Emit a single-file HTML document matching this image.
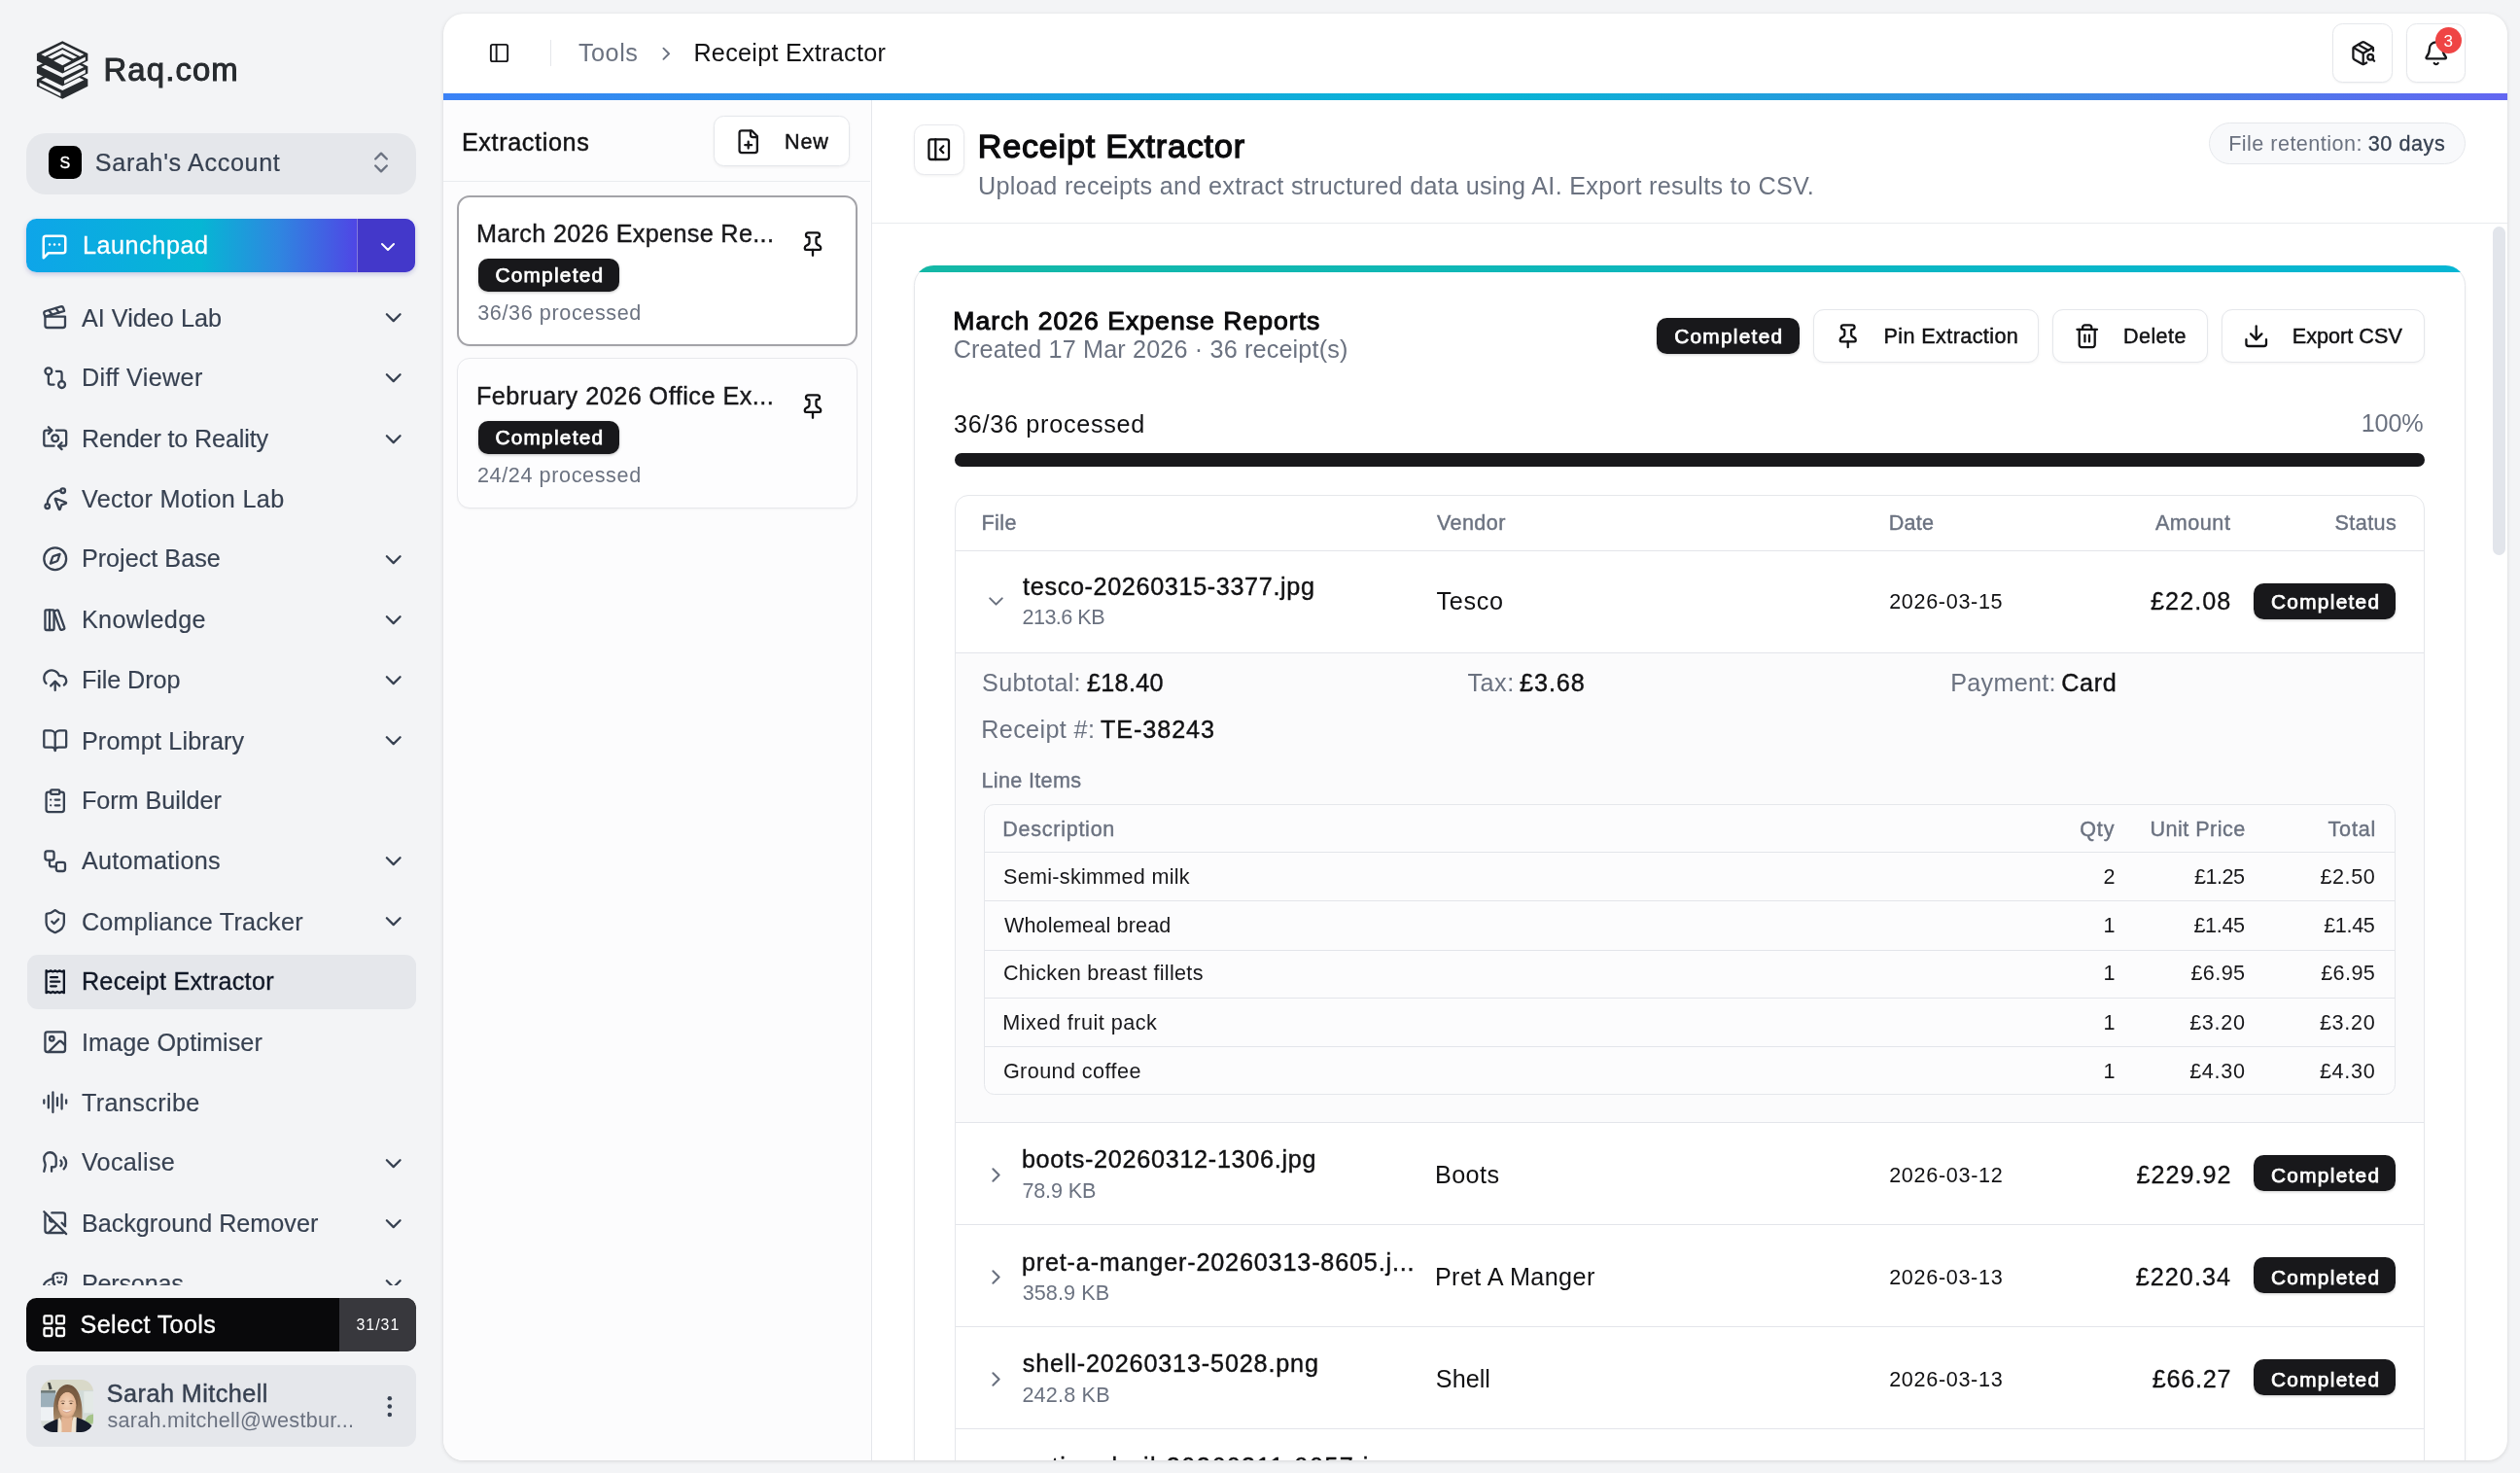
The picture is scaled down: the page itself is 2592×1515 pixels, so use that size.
<!DOCTYPE html>
<html lang="en"><head><meta charset="utf-8"><title>Receipt Extractor - Raq.com</title><style>
*{box-sizing:border-box;margin:0;padding:0}
html,body{width:2592px;height:1515px;overflow:hidden;background:#f3f4f6;font-family:"Liberation Sans",sans-serif;}
body{position:relative}
#app{position:absolute;left:0;top:0;width:2592px;height:1515px;will-change:transform}
.b{position:absolute;display:block}
.t{position:absolute;white-space:nowrap;display:block}
.i{position:absolute;display:block;overflow:visible}
.sidebar{position:absolute;left:0;top:0;width:456px;height:1515px}
.panel{background:#fff;border-radius:20.5px;overflow:hidden;box-shadow:0 1px 4px rgba(0,0,0,.12),0 0 1px rgba(0,0,0,.08)}
</style></head>
<body>
<div id="app">
<aside class="sidebar">
<svg class="i" style="left:34px;top:38px" width="62" height="68" viewBox="0 0 1343 1473">
<polygon points="655,660 1220,940 1220,1100 655,1380 85,1100 85,940" fill="#272b2f"/>
<polygon points="655,722 1135,958 655,1192 180,958" fill="#f3f4f6"/>
<polygon points="615,1253 140,1013 140,1090 615,1328" fill="#f3f4f6"/>
<polygon points="655,375 1220,655 1220,815 655,1095 85,815 85,655" fill="#272b2f"/>
<polygon points="655,437 1135,673 655,907 180,673" fill="#f3f4f6"/>
<polygon points="695,968 1165,728 1165,805 695,1043" fill="#f3f4f6"/>
<polygon points="655,90 1220,370 1220,530 655,810 85,530 85,370" fill="#272b2f"/>
<polygon points="180,388 655,152 1135,388 1045,432 655,238 268,432" fill="#f3f4f6"/>
<polygon points="330,447 655,283 982,447 895,490 655,372 418,490" fill="#f3f4f6"/>
<polygon points="655,432 850,530 655,632 462,530" fill="#f3f4f6"/>
<polygon points="695,683 1165,443 1165,520 695,758" fill="#f3f4f6"/>
</svg>
<span class="t" style="left:106.50px;top:56px;font-size:32.90px;line-height:32.90px;color:#272b2f;letter-spacing:1.103px;-webkit-text-stroke:1.0px #272b2f;">Raq.com</span>
<div class="b" style="left:27.00px;top:136.50px;width:401.00px;height:63.20px;background:#e5e7eb;border-radius:20px;"></div>
<div class="b" style="left:49.50px;top:150.00px;width:34.80px;height:34.00px;background:#000;border-radius:8.5px;"></div>
<span class="t" style="left:61.57px;top:160px;font-size:16.00px;line-height:16.00px;color:#fff;-webkit-text-stroke:0.35px #fff;">S</span>
<span class="t" style="left:97.86px;top:155px;font-size:25.20px;line-height:25.20px;color:#374151;letter-spacing:0.622px;-webkit-text-stroke:0.2px #374151;">Sarah's Account</span>
<svg class="i" style="left:377.80px;top:152.80px" width="28.00" height="28.00" viewBox="0 0 24 24" fill="none" stroke="#6b7280" stroke-width="2" stroke-linecap="round" stroke-linejoin="round"><path d="m7 15 5 5 5-5"/><path d="m7 9 5-5 5 5"/></svg>
<div class="b" style="left:27.00px;top:225.00px;width:400.30px;height:55.00px;border-radius:10.5px;background:linear-gradient(90deg,#0ea5e9 0%,#06b6d4 45%,#2f86e0 65%,#4f46e5 85%,#4f46e5 100%);box-shadow:0 2px 5px rgba(60,60,160,.25);overflow:hidden;"><div class="b" style="left:340px;top:0;width:61px;height:55px;background:#4338ca;border-left:1.5px solid rgba(255,255,255,.35)"></div></div>
<svg class="i" style="left:40.50px;top:239.20px" width="30.00" height="30.00" viewBox="0 0 24 24" fill="none" stroke="#fff" stroke-width="2" stroke-linecap="round" stroke-linejoin="round"><path d="M21 15a2 2 0 0 1-2 2H7l-4 4V5a2 2 0 0 1 2-2h14a2 2 0 0 1 2 2z"/><path d="M8 10h.01"/><path d="M12 10h.01"/><path d="M16 10h.01"/></svg>
<span class="t" style="left:84.93px;top:240px;font-size:25.20px;line-height:25.20px;color:#fff;letter-spacing:0.558px;-webkit-text-stroke:0.3px #fff;">Launchpad</span>
<svg class="i" style="left:386.75px;top:241.80px" width="24.00" height="24.00" viewBox="0 0 24 24" fill="none" stroke="#fff" stroke-width="2" stroke-linecap="round" stroke-linejoin="round"><path d="m6 9 6 6 6-6"/></svg>
<nav class="b" style="left:0;top:290px;width:440px;height:1032px;overflow:hidden">
<svg class="i" style="left:42.89px;top:23.08px" width="27.43" height="27.43" viewBox="0 0 24 24" fill="none" stroke="#374151" stroke-width="2" stroke-linecap="round" stroke-linejoin="round"><path d="M20.2 6 3 11l-.9-2.4c-.3-1.1.3-2.2 1.3-2.5l13.5-4c1.1-.3 2.2.3 2.5 1.3Z"/><path d="m6.2 5.3 3.1 3.9"/><path d="m12.4 3.4 3.1 4"/><path d="M3 11h18v8a2 2 0 0 1-2 2H5a2 2 0 0 1-2-2Z"/></svg>
<span class="t" style="left:83.90px;top:25px;font-size:25.20px;line-height:25.20px;color:#374151;letter-spacing:0.027px;-webkit-text-stroke:0.15px #374151;">AI Video Lab</span>
<svg class="i" style="left:390.59px;top:23.39px" width="27.43" height="27.43" viewBox="0 0 24 24" fill="none" stroke="#374151" stroke-width="2" stroke-linecap="round" stroke-linejoin="round"><path d="m6 9 6 6 6-6"/></svg>
<svg class="i" style="left:42.89px;top:85.18px" width="27.43" height="27.43" viewBox="0 0 24 24" fill="none" stroke="#374151" stroke-width="2" stroke-linecap="round" stroke-linejoin="round"><circle cx="18" cy="18" r="3"/><circle cx="6" cy="6" r="3"/><path d="M13 6h3a2 2 0 0 1 2 2v7"/><path d="M11 18H8a2 2 0 0 1-2-2V9"/></svg>
<span class="t" style="left:83.90px;top:86px;font-size:25.20px;line-height:25.20px;color:#374151;letter-spacing:0.360px;-webkit-text-stroke:0.15px #374151;">Diff Viewer</span>
<svg class="i" style="left:390.59px;top:85.48px" width="27.43" height="27.43" viewBox="0 0 24 24" fill="none" stroke="#374151" stroke-width="2" stroke-linecap="round" stroke-linejoin="round"><path d="m6 9 6 6 6-6"/></svg>
<svg class="i" style="left:42.89px;top:147.27px" width="27.43" height="27.43" viewBox="0 0 24 24" fill="none" stroke="#374151" stroke-width="2" stroke-linecap="round" stroke-linejoin="round"><path d="M11 19H4a2 2 0 0 1-2-2V7a2 2 0 0 1 2-2h5"/><path d="M13 5h7a2 2 0 0 1 2 2v10a2 2 0 0 1-2 2h-5"/><circle cx="12" cy="12" r="3"/><path d="m18 22-3-3 3-3"/><path d="m6 2 3 3-3 3"/></svg>
<span class="t" style="left:83.90px;top:149px;font-size:25.20px;line-height:25.20px;color:#374151;letter-spacing:-0.144px;-webkit-text-stroke:0.15px #374151;">Render to Reality</span>
<svg class="i" style="left:390.59px;top:147.56px" width="27.43" height="27.43" viewBox="0 0 24 24" fill="none" stroke="#374151" stroke-width="2" stroke-linecap="round" stroke-linejoin="round"><path d="m6 9 6 6 6-6"/></svg>
<svg class="i" style="left:42.89px;top:209.35px" width="27.43" height="27.43" viewBox="0 0 24 24" fill="none" stroke="#374151" stroke-width="2" stroke-linecap="round" stroke-linejoin="round"><path d="M12.034 12.681a.498.498 0 0 1 .647-.647l9 3.5a.5.5 0 0 1-.033.943l-3.444 1.068a1 1 0 0 0-.66.66l-1.067 3.443a.5.5 0 0 1-.943.033z"/><path d="M5 17A12 12 0 0 1 17 5"/><circle cx="19" cy="5" r="2"/><circle cx="5" cy="19" r="2"/></svg>
<span class="t" style="left:83.90px;top:211px;font-size:25.20px;line-height:25.20px;color:#374151;letter-spacing:0.330px;-webkit-text-stroke:0.15px #374151;">Vector Motion Lab</span>
<svg class="i" style="left:42.89px;top:271.45px" width="27.43" height="27.43" viewBox="0 0 24 24" fill="none" stroke="#374151" stroke-width="2" stroke-linecap="round" stroke-linejoin="round"><path d="m16.24 7.76-1.804 5.411a2 2 0 0 1-1.265 1.265L7.76 16.24l1.804-5.411a2 2 0 0 1 1.265-1.265z"/><circle cx="12" cy="12" r="10"/></svg>
<span class="t" style="left:83.90px;top:272px;font-size:25.20px;line-height:25.20px;color:#374151;letter-spacing:0.009px;-webkit-text-stroke:0.15px #374151;">Project Base</span>
<svg class="i" style="left:390.59px;top:271.75px" width="27.43" height="27.43" viewBox="0 0 24 24" fill="none" stroke="#374151" stroke-width="2" stroke-linecap="round" stroke-linejoin="round"><path d="m6 9 6 6 6-6"/></svg>
<svg class="i" style="left:42.89px;top:333.54px" width="27.43" height="27.43" viewBox="0 0 24 24" fill="none" stroke="#374151" stroke-width="2" stroke-linecap="round" stroke-linejoin="round"><rect width="8" height="18" x="3" y="3" rx="1"/><path d="M7 3v18"/><path d="M20.4 18.9c.2.5-.1 1.1-.6 1.3l-1.9.7c-.5.2-1.1-.1-1.3-.6L11.1 5.1c-.2-.5.1-1.1.6-1.3l1.900-.7c.5-.2 1.100.1 1.300.6Z"/></svg>
<span class="t" style="left:83.90px;top:335px;font-size:25.20px;line-height:25.20px;color:#374151;letter-spacing:0.377px;-webkit-text-stroke:0.15px #374151;">Knowledge</span>
<svg class="i" style="left:390.59px;top:333.84px" width="27.43" height="27.43" viewBox="0 0 24 24" fill="none" stroke="#374151" stroke-width="2" stroke-linecap="round" stroke-linejoin="round"><path d="m6 9 6 6 6-6"/></svg>
<svg class="i" style="left:42.89px;top:395.62px" width="27.43" height="27.43" viewBox="0 0 24 24" fill="none" stroke="#374151" stroke-width="2" stroke-linecap="round" stroke-linejoin="round"><path d="M12 13v8"/><path d="M4 14.899A7 7 0 1 1 15.71 8h1.79a4.5 4.5 0 0 1 2.5 8.242"/><path d="m8 17 4-4 4 4"/></svg>
<span class="t" style="left:83.90px;top:397px;font-size:25.20px;line-height:25.20px;color:#374151;letter-spacing:-0.072px;-webkit-text-stroke:0.15px #374151;">File Drop</span>
<svg class="i" style="left:390.59px;top:395.93px" width="27.43" height="27.43" viewBox="0 0 24 24" fill="none" stroke="#374151" stroke-width="2" stroke-linecap="round" stroke-linejoin="round"><path d="m6 9 6 6 6-6"/></svg>
<svg class="i" style="left:42.89px;top:457.72px" width="27.43" height="27.43" viewBox="0 0 24 24" fill="none" stroke="#374151" stroke-width="2" stroke-linecap="round" stroke-linejoin="round"><path d="M12 7v14"/><path d="M3 18a1 1 0 0 1-1-1V4a1 1 0 0 1 1-1h5a4 4 0 0 1 4 4 4 4 0 0 1 4-4h5a1 1 0 0 1 1 1v13a1 1 0 0 1-1 1h-6a3 3 0 0 0-3 3 3 3 0 0 0-3-3z"/></svg>
<span class="t" style="left:83.90px;top:460px;font-size:25.20px;line-height:25.20px;color:#374151;letter-spacing:0.165px;-webkit-text-stroke:0.15px #374151;">Prompt Library</span>
<svg class="i" style="left:390.59px;top:458.02px" width="27.43" height="27.43" viewBox="0 0 24 24" fill="none" stroke="#374151" stroke-width="2" stroke-linecap="round" stroke-linejoin="round"><path d="m6 9 6 6 6-6"/></svg>
<svg class="i" style="left:42.89px;top:519.80px" width="27.43" height="27.43" viewBox="0 0 24 24" fill="none" stroke="#374151" stroke-width="2" stroke-linecap="round" stroke-linejoin="round"><rect width="8" height="4" x="8" y="2" rx="1" ry="1"/><path d="M16 4h2a2 2 0 0 1 2 2v14a2 2 0 0 1-2 2H6a2 2 0 0 1-2-2V6a2 2 0 0 1 2-2h2"/><path d="M12 11h4"/><path d="M12 16h4"/><path d="M8 11h.01"/><path d="M8 16h.01"/></svg>
<span class="t" style="left:83.90px;top:521px;font-size:25.20px;line-height:25.20px;color:#374151;letter-spacing:-0.020px;-webkit-text-stroke:0.15px #374151;">Form Builder</span>
<svg class="i" style="left:42.89px;top:581.89px" width="27.43" height="27.43" viewBox="0 0 24 24" fill="none" stroke="#374151" stroke-width="2" stroke-linecap="round" stroke-linejoin="round"><rect width="8" height="8" x="3" y="3" rx="2"/><path d="M7 11v4a2 2 0 0 0 2 2h4"/><rect width="8" height="8" x="13" y="13" rx="2"/></svg>
<span class="t" style="left:83.90px;top:583px;font-size:25.20px;line-height:25.20px;color:#374151;letter-spacing:0.268px;-webkit-text-stroke:0.15px #374151;">Automations</span>
<svg class="i" style="left:390.59px;top:582.20px" width="27.43" height="27.43" viewBox="0 0 24 24" fill="none" stroke="#374151" stroke-width="2" stroke-linecap="round" stroke-linejoin="round"><path d="m6 9 6 6 6-6"/></svg>
<svg class="i" style="left:42.89px;top:643.99px" width="27.43" height="27.43" viewBox="0 0 24 24" fill="none" stroke="#374151" stroke-width="2" stroke-linecap="round" stroke-linejoin="round"><path d="M20 13c0 5-3.5 7.5-7.66 8.950a1 1 0 0 1-.67-.01C7.5 20.5 4 18 4 13V6a1 1 0 0 1 1-1c2 0 4.5-1.2 6.240-2.720a1.170 1.170 0 0 1 1.520 0C14.510 3.810 17 5 19 5a1 1 0 0 1 1 1z"/><path d="m9 12 2 2 4-4"/></svg>
<span class="t" style="left:83.90px;top:646px;font-size:25.20px;line-height:25.20px;color:#374151;letter-spacing:0.216px;-webkit-text-stroke:0.15px #374151;">Compliance Tracker</span>
<svg class="i" style="left:390.59px;top:644.29px" width="27.43" height="27.43" viewBox="0 0 24 24" fill="none" stroke="#374151" stroke-width="2" stroke-linecap="round" stroke-linejoin="round"><path d="m6 9 6 6 6-6"/></svg>
<div class="b" style="left:27.50px;top:692.00px;width:400.80px;height:55.50px;background:#e5e7eb;border-radius:11px;"></div>
<svg class="i" style="left:42.89px;top:706.07px" width="27.43" height="27.43" viewBox="0 0 24 24" fill="none" stroke="#111827" stroke-width="2" stroke-linecap="round" stroke-linejoin="round"><path d="M4 2v20l2-1 2 1 2-1 2 1 2-1 2 1 2-1 2 1V2l-2 1-2-1-2 1-2-1-2 1-2-1-2 1Z"/><path d="M14 8H8"/><path d="M16 12H8"/><path d="M13 16H8"/></svg>
<span class="t" style="left:83.90px;top:707px;font-size:25.20px;line-height:25.20px;color:#111827;letter-spacing:0.281px;-webkit-text-stroke:0.35px #111827;">Receipt Extractor</span>
<svg class="i" style="left:42.89px;top:768.16px" width="27.43" height="27.43" viewBox="0 0 24 24" fill="none" stroke="#374151" stroke-width="2" stroke-linecap="round" stroke-linejoin="round"><rect width="18" height="18" x="3" y="3" rx="2" ry="2"/><circle cx="9" cy="9" r="2"/><path d="m21 15-3.086-3.086a2 2 0 0 0-2.828 0L6 21"/></svg>
<span class="t" style="left:83.90px;top:770px;font-size:25.20px;line-height:25.20px;color:#374151;letter-spacing:0.083px;-webkit-text-stroke:0.15px #374151;">Image Optimiser</span>
<svg class="i" style="left:42.89px;top:830.25px" width="27.43" height="27.43" viewBox="0 0 24 24" fill="none" stroke="#374151" stroke-width="2" stroke-linecap="round" stroke-linejoin="round"><path d="M2 10v3"/><path d="M6 6v11"/><path d="M10 3v18"/><path d="M14 8v7"/><path d="M18 5v13"/><path d="M22 10v3"/></svg>
<span class="t" style="left:83.90px;top:832px;font-size:25.20px;line-height:25.20px;color:#374151;letter-spacing:0.374px;-webkit-text-stroke:0.15px #374151;">Transcribe</span>
<svg class="i" style="left:42.89px;top:892.34px" width="27.43" height="27.43" viewBox="0 0 24 24" fill="none" stroke="#374151" stroke-width="2" stroke-linecap="round" stroke-linejoin="round"><path d="M8.8 20v-4.1l1.9.2a2.3 2.3 0 0 0 2.164-2.1V8.300A5.370 5.370 0 0 0 2 8.250c0 2.8.656 3.054 1 4.550a5.770 5.770 0 0 1 .029 2.758L2 20"/><path d="M19.8 17.8a7.500 7.500 0 0 0 .003-10.603"/><path d="M17 15a3.500 3.500 0 0 0-.025-4.975"/></svg>
<span class="t" style="left:83.90px;top:893px;font-size:25.20px;line-height:25.20px;color:#374151;letter-spacing:0.301px;-webkit-text-stroke:0.15px #374151;">Vocalise</span>
<svg class="i" style="left:390.59px;top:892.64px" width="27.43" height="27.43" viewBox="0 0 24 24" fill="none" stroke="#374151" stroke-width="2" stroke-linecap="round" stroke-linejoin="round"><path d="m6 9 6 6 6-6"/></svg>
<svg class="i" style="left:42.89px;top:954.43px" width="27.43" height="27.43" viewBox="0 0 24 24" fill="none" stroke="#374151" stroke-width="2" stroke-linecap="round" stroke-linejoin="round"><line x1="2" x2="22" y1="2" y2="22"/><path d="M10.41 10.41a2 2 0 1 1-2.83-2.83"/><line x1="13.5" x2="6" y1="13.5" y2="21"/><line x1="18" x2="21" y1="12" y2="15"/><path d="M3.590 3.590A1.990 1.990 0 0 0 3 5v14a2 2 0 0 0 2 2h14c.550 0 1.052-.220 1.410-.590"/><path d="M21 15V5a2 2 0 0 0-2-2H9"/></svg>
<span class="t" style="left:83.90px;top:956px;font-size:25.20px;line-height:25.20px;color:#374151;letter-spacing:-0.012px;-webkit-text-stroke:0.15px #374151;">Background Remover</span>
<svg class="i" style="left:390.59px;top:954.73px" width="27.43" height="27.43" viewBox="0 0 24 24" fill="none" stroke="#374151" stroke-width="2" stroke-linecap="round" stroke-linejoin="round"><path d="m6 9 6 6 6-6"/></svg>
<svg class="i" style="left:42.89px;top:1016.52px" width="27.43" height="27.43" viewBox="0 0 24 24" fill="none" stroke="#374151" stroke-width="2" stroke-linecap="round" stroke-linejoin="round"><path d="M10 11h.01"/><path d="M14 6h.01"/><path d="M18 6h.01"/><path d="M6.5 13.1h.01"/><path d="M22 5c0 9-4 12-6 12s-6-3-6-12c0-2 2-3 6-3s6 1 6 3"/><path d="M17.4 9.9c-.8.8-2 .8-2.8 0"/><path d="M10.100 7.100C9 7.200 7.700 7.700 6 8.600c-3.500 2-4.700 3.900-3.700 5.600 4.500 7.800 9.500 8.400 11.200 7.400.9-.5 1.900-2.100 1.900-4.700"/><path d="M9.100 16.500c.3-1.100 1.400-1.700 2.400-1.400"/></svg>
<span class="t" style="left:83.90px;top:1018px;font-size:25.20px;line-height:25.20px;color:#374151;letter-spacing:-0.208px;-webkit-text-stroke:0.15px #374151;">Personas</span>
<svg class="i" style="left:390.59px;top:1016.82px" width="27.43" height="27.43" viewBox="0 0 24 24" fill="none" stroke="#374151" stroke-width="2" stroke-linecap="round" stroke-linejoin="round"><path d="m6 9 6 6 6-6"/></svg>
</nav>
<div class="b" style="left:27.00px;top:1335.00px;width:400.50px;height:55.00px;background:#09090b;border-radius:10.5px;overflow:hidden;"><div class="b" style="left:322px;top:0;width:80px;height:55px;background:#38383d"></div></div>
<svg class="i" style="left:41.89px;top:1349.79px" width="27.43" height="27.43" viewBox="0 0 24 24" fill="none" stroke="#fff" stroke-width="2" stroke-linecap="round" stroke-linejoin="round"><rect width="7" height="7" x="3" y="3" rx="1"/><rect width="7" height="7" x="14" y="3" rx="1"/><rect width="7" height="7" x="14" y="14" rx="1"/><rect width="7" height="7" x="3" y="14" rx="1"/></svg>
<span class="t" style="left:82.61px;top:1350px;font-size:25.20px;line-height:25.20px;color:#fff;letter-spacing:0.353px;-webkit-text-stroke:0.3px #fff;">Select Tools</span>
<span class="t" style="left:366.40px;top:1355px;font-size:15.80px;line-height:15.80px;color:#fff;letter-spacing:1.083px;">31/31</span>
<div class="b" style="left:27.00px;top:1404.00px;width:400.50px;height:83.50px;background:#e5e7eb;border-radius:12px;"></div>
<div class="b" style="left:41.8px;top:1418.8px;width:54.4px;height:54.4px;border-radius:12.500px;overflow:hidden">
<svg width="54.4" height="54.4" viewBox="0 0 54 54" style="display:block">
<defs><filter id="avblur" x="-10%" y="-10%" width="120%" height="120%"><feGaussianBlur stdDeviation="0.55"/></filter>
<radialGradient id="avface" cx="0.5" cy="0.42" r="0.62"><stop offset="0" stop-color="#f3d2b8"/><stop offset="0.7" stop-color="#e5b896"/><stop offset="1" stop-color="#cf9d7c"/></radialGradient>
<linearGradient id="avhair" x1="0" y1="0" x2="0" y2="1"><stop offset="0" stop-color="#6d523c"/><stop offset="0.5" stop-color="#8a6b4e"/><stop offset="1" stop-color="#b29472"/></linearGradient></defs>
<g filter="url(#avblur)">
<rect x="-2" y="-2" width="58" height="58" fill="#d6dbd6"/>
<rect x="-2" y="-2" width="58" height="14" fill="#d9d9c9"/>
<rect x="-2" y="12" width="17" height="17" fill="#9db0bb"/>
<rect x="-2" y="11" width="17" height="2.500" fill="#6f7a78"/>
<rect x="-2" y="28" width="17" height="14" fill="#eef1f4"/>
<rect x="38" y="11" width="18" height="26" fill="#d2dbd8"/>
<rect x="44" y="12" width="12" height="22" fill="#e3e9e6"/>
<path d="M45 44 C45 38 50 35 56 35 L56 46Z" fill="#a6c48a"/>
<path d="M7 3 L9.500 3 L11.500 9.500 L8.500 10.500Z" fill="#3f4340"/>
<path d="M13.500 42 C11 22 16 5.500 27 5 C38 5 43.500 20 42 42 L36 46 L18 46Z" fill="url(#avhair)"/>
<path d="M-1 56 C0 47 7 44 17.500 40 L22 56Z" fill="#141a2b"/>
<path d="M55 56 C55 47 48 42 36.500 38.500 L31 56Z" fill="#141a2b"/>
<path d="M17.500 40 L19.500 39 L23 47 L21 56 L17 56Z" fill="#efe4d2"/>
<path d="M36.500 38.500 L33.500 38 L30 47 L31.500 56 L36 56Z" fill="#efe4d2"/>
<path d="M21 38 L32.500 38 L31 56 L21.500 56Z" fill="#e3b493"/>
<ellipse cx="26.800" cy="26" rx="9.300" ry="13.300" fill="url(#avface)"/>
<path d="M16.500 30 C15 16 20 8.500 27 8.500 C34.500 8.500 39 16 37.500 30 C36.500 19 33 13 27.500 12.500 C21 13 18 19 16.500 30Z" fill="#7a5c43"/>
<path d="M21.300 30.300 Q26.500 36 31.800 30.300 Q26.500 32.300 21.300 30.300Z" fill="#fbf4ef"/>
<path d="M21 30 Q26.500 38 32 30 Q26.500 35.500 21 30Z" fill="#c98f84" opacity="0.6"/>
<ellipse cx="22.600" cy="24.300" rx="1.500" ry="0.800" fill="#5e4535"/><ellipse cx="30.800" cy="24.300" rx="1.500" ry="0.800" fill="#5e4535"/>
<path d="M20.300 22.300 Q22.600 21 24.800 22.200" stroke="#8a6a52" stroke-width="0.7" fill="none"/><path d="M28.600 22.200 Q30.800 21 33.200 22.300" stroke="#8a6a52" stroke-width="0.7" fill="none"/>
</g></svg>
</div>
<span class="t" style="left:109.86px;top:1421px;font-size:25.20px;line-height:25.20px;color:#374151;letter-spacing:0.455px;-webkit-text-stroke:0.45px #374151;">Sarah Mitchell</span>
<span class="t" style="left:110.40px;top:1450px;font-size:21.60px;line-height:21.60px;color:#6b7280;letter-spacing:0.248px;">sarah.mitchell@westbur...</span>
<svg class="i" style="left:396px;top:1434px" width="10" height="26" viewBox="0 0 10 26"><circle cx="4.8" cy="4.3" r="2.25" fill="#374151"/><circle cx="4.8" cy="12.6" r="2.25" fill="#374151"/><circle cx="4.8" cy="20.9" r="2.25" fill="#374151"/></svg>
</aside>
<main class="b panel" style="left:456px;top:13.75px;width:2122.5px;height:1487.75px;">
<div class="b" style="left:-456px;top:-13.75px;width:2592px;height:1515px;">
<header>
<svg class="i" style="left:502.10px;top:43.40px" width="23.00" height="23.00" viewBox="0 0 24 24" fill="none" stroke="#18181b" stroke-width="2" stroke-linecap="round" stroke-linejoin="round"><rect width="18" height="18" x="3" y="3" rx="2"/><path d="M9 3v18"/></svg>
<div class="b" style="left:565.50px;top:41.00px;width:1.50px;height:26.50px;background:#e5e7eb;"></div>
<span class="t" style="left:594.93px;top:42px;font-size:25.20px;line-height:25.20px;color:#6b7280;letter-spacing:0.537px;">Tools</span>
<svg class="i" style="left:673.95px;top:43.55px" width="22.50" height="22.50" viewBox="0 0 24 24" fill="none" stroke="#6b7280" stroke-width="2" stroke-linecap="round" stroke-linejoin="round"><path d="m9 18 6-6-6-6"/></svg>
<span class="t" style="left:713.43px;top:42px;font-size:25.20px;line-height:25.20px;color:#111113;letter-spacing:0.263px;">Receipt Extractor</span>
<div class="b" style="left:2399.00px;top:24.25px;width:61.75px;height:60.55px;border:1.5px solid #e5e7eb;border-radius:10.5px;background:#fff;box-shadow:0 1px 2px rgba(0,0,0,.05);"></div>
<div class="b" style="left:2475.20px;top:24.25px;width:60.55px;height:60.55px;border:1.5px solid #e5e7eb;border-radius:10.5px;background:#fff;box-shadow:0 1px 2px rgba(0,0,0,.05);"></div>
<svg class="i" style="left:2417.09px;top:40.69px" width="27.43" height="27.43" viewBox="0 0 24 24" fill="none" stroke="#18181b" stroke-width="2" stroke-linecap="round" stroke-linejoin="round"><path d="M21 10V8a2 2 0 0 0-1-1.730l-7-4a2 2 0 0 0-2 0l-7 4A2 2 0 0 0 3 8v8a2 2 0 0 0 1 1.730l7 4a2 2 0 0 0 2 0l2-1.140"/><path d="m7.500 4.270 9 5.150"/><polyline points="3.290 7 12 12 20.710 7"/><line x1="12" x2="12" y1="22" y2="12"/><circle cx="18.500" cy="15.500" r="2.500"/><path d="M20.270 17.270 22 19"/></svg>
<svg class="i" style="left:2491.59px;top:40.78px" width="27.43" height="27.43" viewBox="0 0 24 24" fill="none" stroke="#18181b" stroke-width="2" stroke-linecap="round" stroke-linejoin="round"><path d="M10.268 21a2 2 0 0 0 3.464 0"/><path d="M3.262 15.326A1 1 0 0 0 4 17h16a1 1 0 0 0 .740-1.673C19.410 13.956 18 12.499 18 8A6 6 0 0 0 6 8c0 4.499-1.411 5.956-2.738 7.326"/></svg>
<div class="b" style="left:2505.10px;top:28.40px;width:27.00px;height:27.00px;background:#ef4444;border-radius:50%;"></div>
<span class="t" style="left:2513.62px;top:34px;font-size:17.00px;line-height:17.00px;color:#fff;">3</span>
</header>
<div class="b" style="left:456.00px;top:95.75px;width:2122.50px;height:7.50px;background:linear-gradient(90deg,#3b82f6 0%,#06b6d4 50%,#6366f1 100%);"></div>
<section class="list">
<div class="b" style="left:456.00px;top:103.25px;width:440.50px;height:1398.25px;background:#fcfcfd;border-right:1.5px solid #e5e7eb;border-bottom-left-radius:20px;"></div>
<span class="t" style="left:474.93px;top:134px;font-size:25.20px;line-height:25.20px;color:#111113;letter-spacing:0.633px;-webkit-text-stroke:0.45px #111113;">Extractions</span>
<div class="b" style="left:734.30px;top:119.20px;width:139.45px;height:52.20px;border:1.5px solid #e5e7eb;border-radius:10.5px;background:#fff;box-shadow:0 1px 3px rgba(0,0,0,.06);"></div>
<svg class="i" style="left:756.08px;top:132.28px" width="27.43" height="27.43" viewBox="0 0 24 24" fill="none" stroke="#18181b" stroke-width="2" stroke-linecap="round" stroke-linejoin="round"><path d="M15 2H6a2 2 0 0 0-2 2v16a2 2 0 0 0 2 2h12a2 2 0 0 0 2-2V7Z"/><path d="M14 2v4a2 2 0 0 0 2 2h4"/><path d="M9 15h6"/><path d="M12 18v-6"/></svg>
<span class="t" style="left:806.98px;top:135px;font-size:21.60px;line-height:21.60px;color:#111113;letter-spacing:0.879px;-webkit-text-stroke:0.45px #111113;">New</span>
<div class="b" style="left:456.00px;top:186.00px;width:439.00px;height:1.00px;background:#e9ebef;"></div>
<div class="b" style="left:470.00px;top:201.25px;width:411.75px;height:155.00px;border:2px solid #a3a3a8;border-radius:13px;background:#fff;box-shadow:0 1px 2px rgba(0,0,0,.04);"></div>
<span class="t" style="left:489.93px;top:228px;font-size:25.20px;line-height:25.20px;color:#18181b;letter-spacing:0.337px;-webkit-text-stroke:0.4px #18181b;">March 2026 Expense Re...</span>
<svg class="i" style="left:821.70px;top:236.95px" width="28.00" height="28.00" viewBox="0 0 24 24" fill="none" stroke="#111113" stroke-width="2" stroke-linecap="round" stroke-linejoin="round"><path d="M12 17v5"/><path d="M9 10.760a2 2 0 0 1-1.110 1.790l-1.780.9A2 2 0 0 0 5 15.240V16a1 1 0 0 0 1 1h12a1 1 0 0 0 1-1v-.760a2 2 0 0 0-1.110-1.790l-1.780-.9A2 2 0 0 1 15 10.760V7a1 1 0 0 1 1-1 2 2 0 0 0 0-4H8a2 2 0 0 0 0 4 1 1 0 0 1 1 1z"/></svg>
<div class="b" style="left:492.00px;top:266.25px;width:145.00px;height:33.25px;background:#18181b;border-radius:10px;box-shadow:0 1px 3px rgba(0,0,0,.25);"></div>
<span class="t" style="left:509.44px;top:273px;font-size:20.80px;line-height:20.80px;color:#fff;letter-spacing:1.257px;-webkit-text-stroke:0.75px #fff;">Completed</span>
<span class="t" style="left:491.18px;top:311px;font-size:21.60px;line-height:21.60px;color:#6b7280;letter-spacing:0.607px;">36/36 processed</span>
<div class="b" style="left:470.00px;top:368.25px;width:411.75px;height:154.25px;border:1.5px solid #e7e8ec;border-radius:13px;background:#fdfdfe;box-shadow:0 1px 2px rgba(0,0,0,.04);"></div>
<span class="t" style="left:489.93px;top:395px;font-size:25.20px;line-height:25.20px;color:#18181b;letter-spacing:0.492px;-webkit-text-stroke:0.4px #18181b;">February 2026 Office Ex...</span>
<svg class="i" style="left:821.70px;top:403.95px" width="28.00" height="28.00" viewBox="0 0 24 24" fill="none" stroke="#111113" stroke-width="2" stroke-linecap="round" stroke-linejoin="round"><path d="M12 17v5"/><path d="M9 10.760a2 2 0 0 1-1.110 1.790l-1.780.9A2 2 0 0 0 5 15.240V16a1 1 0 0 0 1 1h12a1 1 0 0 0 1-1v-.760a2 2 0 0 0-1.110-1.790l-1.780-.9A2 2 0 0 1 15 10.760V7a1 1 0 0 1 1-1 2 2 0 0 0 0-4H8a2 2 0 0 0 0 4 1 1 0 0 1 1 1z"/></svg>
<div class="b" style="left:492.00px;top:433.25px;width:145.00px;height:33.25px;background:#18181b;border-radius:10px;box-shadow:0 1px 3px rgba(0,0,0,.25);"></div>
<span class="t" style="left:509.44px;top:440px;font-size:20.80px;line-height:20.80px;color:#fff;letter-spacing:1.257px;-webkit-text-stroke:0.75px #fff;">Completed</span>
<span class="t" style="left:490.91px;top:478px;font-size:21.60px;line-height:21.60px;color:#6b7280;letter-spacing:0.612px;">24/24 processed</span>
</section>
<section class="content">
<div class="b" style="left:940.00px;top:127.50px;width:52.00px;height:52.50px;border:1.5px solid #e8e9ed;border-radius:10.5px;background:#fff;box-shadow:0 1px 3px rgba(0,0,0,.06);"></div>
<svg class="i" style="left:952.49px;top:139.88px" width="27.43" height="27.43" viewBox="0 0 24 24" fill="none" stroke="#111113" stroke-width="2" stroke-linecap="round" stroke-linejoin="round"><rect width="18" height="18" x="3" y="3" rx="2"/><path d="M9 3v18"/><path d="m16 15-3-3 3-3"/></svg>
<span class="t" style="left:1005.81px;top:133px;font-size:34.00px;line-height:34.00px;color:#0b0b0d;letter-spacing:0.837px;-webkit-text-stroke:1.3px #0b0b0d;">Receipt Extractor</span>
<span class="t" style="left:1006.06px;top:179px;font-size:25.20px;line-height:25.20px;color:#6b7280;letter-spacing:0.295px;">Upload receipts and extract structured data using AI. Export results to CSV.</span>
<div class="b" style="left:2271.50px;top:126.25px;width:264.25px;height:43.00px;border:1.5px solid #e5e7eb;border-radius:22px;background:#f8f9fb;"></div>
<span class="t" style="left:2292.23px;top:137px;font-size:21.60px;line-height:21.60px;color:#6b7280;letter-spacing:0.455px;">File retention:</span>
<span class="t" style="left:2435.68px;top:137px;font-size:21.60px;line-height:21.60px;color:#374151;letter-spacing:0.575px;-webkit-text-stroke:0.3px #374151;">30 days</span>
<div class="b" style="left:896.50px;top:229.00px;width:1682.00px;height:1.00px;background:#e9ebef;"></div>
<div class="b" style="left:2563.60px;top:232.50px;width:13.40px;height:338.00px;background:#e2e5eb;border-radius:7px;"></div>
<div class="b" style="left:940.00px;top:272.50px;width:1595.75px;height:1287.50px;border:1.5px solid #e5e7eb;border-radius:20.5px;background:#fff;box-shadow:0 1px 3px rgba(0,0,0,.06);"></div>
<div class="b" style="left:940.00px;top:272.50px;width:1595.75px;height:1287.50px;border-radius:20.5px;overflow:hidden;"><div class="b" style="left:0;top:0;width:1596px;height:7.8px;background:linear-gradient(90deg,#14b8a6,#06b6d4)"></div></div>
<span class="t" style="left:980.32px;top:317px;font-size:26.60px;line-height:26.60px;color:#0b0b0d;letter-spacing:1.009px;-webkit-text-stroke:1.0px #0b0b0d;">March 2026 Expense Reports</span>
<span class="t" style="left:980.72px;top:347px;font-size:25.20px;line-height:25.20px;color:#6b7280;letter-spacing:0.154px;">Created 17 Mar 2026 · 36 receipt(s)</span>
<div class="b" style="left:1704.00px;top:327.00px;width:146.75px;height:36.75px;background:#18181b;border-radius:10.5px;box-shadow:0 1px 3px rgba(0,0,0,.2);"></div>
<span class="t" style="left:1722.19px;top:336px;font-size:20.80px;line-height:20.80px;color:#fff;letter-spacing:1.288px;-webkit-text-stroke:0.75px #fff;">Completed</span>
<div class="b" style="left:1865.00px;top:318.25px;width:231.50px;height:54.25px;border:1.5px solid #e5e7eb;border-radius:11px;background:#fff;box-shadow:0 1px 3px rgba(0,0,0,.05);"></div>
<svg class="i" style="left:1886.88px;top:331.59px" width="27.43" height="27.43" viewBox="0 0 24 24" fill="none" stroke="#111113" stroke-width="2" stroke-linecap="round" stroke-linejoin="round"><path d="M12 17v5"/><path d="M9 10.760a2 2 0 0 1-1.110 1.790l-1.780.9A2 2 0 0 0 5 15.240V16a1 1 0 0 0 1 1h12a1 1 0 0 0 1-1v-.760a2 2 0 0 0-1.110-1.790l-1.780-.9A2 2 0 0 1 15 10.760V7a1 1 0 0 1 1-1 2 2 0 0 0 0-4H8a2 2 0 0 0 0 4 1 1 0 0 1 1 1z"/></svg>
<span class="t" style="left:1937.48px;top:335px;font-size:21.60px;line-height:21.60px;color:#111113;letter-spacing:0.397px;-webkit-text-stroke:0.45px #111113;">Pin Extraction</span>
<div class="b" style="left:2111.25px;top:318.25px;width:159.50px;height:54.25px;border:1.5px solid #e5e7eb;border-radius:11px;background:#fff;box-shadow:0 1px 3px rgba(0,0,0,.05);"></div>
<svg class="i" style="left:2132.88px;top:331.59px" width="27.43" height="27.43" viewBox="0 0 24 24" fill="none" stroke="#111113" stroke-width="2" stroke-linecap="round" stroke-linejoin="round"><path d="M3 6h18"/><path d="M19 6v14c0 1-1 2-2 2H7c-1 0-2-1-2-2V6"/><path d="M8 6V4c0-1 1-2 2-2h4c1 0 2 1 2 2v2"/><line x1="10" x2="10" y1="11" y2="17"/><line x1="14" x2="14" y1="11" y2="17"/></svg>
<span class="t" style="left:2183.98px;top:335px;font-size:21.60px;line-height:21.60px;color:#111113;letter-spacing:0.408px;-webkit-text-stroke:0.45px #111113;">Delete</span>
<div class="b" style="left:2285.00px;top:318.25px;width:208.75px;height:54.25px;border:1.5px solid #e5e7eb;border-radius:11px;background:#fff;box-shadow:0 1px 3px rgba(0,0,0,.05);"></div>
<svg class="i" style="left:2306.68px;top:331.59px" width="27.43" height="27.43" viewBox="0 0 24 24" fill="none" stroke="#111113" stroke-width="2" stroke-linecap="round" stroke-linejoin="round"><path d="M21 15v4a2 2 0 0 1-2 2H5a2 2 0 0 1-2-2v-4"/><polyline points="7 10 12 15 17 10"/><line x1="12" x2="12" y1="15" y2="3"/></svg>
<span class="t" style="left:2357.73px;top:335px;font-size:21.60px;line-height:21.60px;color:#111113;letter-spacing:0.030px;-webkit-text-stroke:0.45px #111113;">Export CSV</span>
<span class="t" style="left:981.04px;top:424px;font-size:25.20px;line-height:25.20px;color:#111113;letter-spacing:0.714px;">36/36 processed</span>
<span class="t" style="left:2428.78px;top:423px;font-size:25.20px;line-height:25.20px;color:#6b7280;letter-spacing:-0.178px;">100%</span>
<div class="b" style="left:982.00px;top:466.25px;width:1512.00px;height:13.75px;background:#18181b;border-radius:7px;"></div>
<div class="b" style="left:982.00px;top:509.25px;width:1512.00px;height:1050.75px;border:1.5px solid #e5e7eb;border-radius:14px;background:#fff;overflow:hidden;"><div class="b" style="left:-2px;top:160.5px;width:1520px;height:484.5px;background:#fbfbfc"></div></div>
<span class="t" style="left:1009.48px;top:527px;font-size:21.60px;line-height:21.60px;color:#6b7280;letter-spacing:0.392px;-webkit-text-stroke:0.4px #6b7280;">File</span>
<span class="t" style="left:1477.91px;top:527px;font-size:21.60px;line-height:21.60px;color:#6b7280;letter-spacing:0.398px;-webkit-text-stroke:0.4px #6b7280;">Vendor</span>
<span class="t" style="left:1942.73px;top:527px;font-size:21.60px;line-height:21.60px;color:#6b7280;letter-spacing:0.202px;-webkit-text-stroke:0.4px #6b7280;">Date</span>
<span class="t" style="left:2216.96px;top:527px;font-size:21.60px;line-height:21.60px;color:#6b7280;letter-spacing:0.502px;-webkit-text-stroke:0.4px #6b7280;">Amount</span>
<span class="t" style="left:2401.52px;top:527px;font-size:21.60px;line-height:21.60px;color:#6b7280;letter-spacing:0.405px;-webkit-text-stroke:0.4px #6b7280;">Status</span>
<div class="b" style="left:983.00px;top:566.00px;width:1510.00px;height:1.00px;background:#e3e5ea;"></div>
<svg class="i" style="left:1012.10px;top:606.05px" width="25.00" height="25.00" viewBox="0 0 24 24" fill="none" stroke="#6b7280" stroke-width="2" stroke-linecap="round" stroke-linejoin="round"><path d="m6 9 6 6 6-6"/></svg>
<span class="t" style="left:1052.12px;top:591px;font-size:25.20px;line-height:25.20px;color:#111113;letter-spacing:0.644px;-webkit-text-stroke:0.4px #111113;">tesco-20260315-3377.jpg</span>
<span class="t" style="left:1051.41px;top:624px;font-size:21.60px;line-height:21.60px;color:#6b7280;letter-spacing:-0.521px;">213.6 KB</span>
<span class="t" style="left:1477.43px;top:606px;font-size:25.20px;line-height:25.20px;color:#111113;letter-spacing:0.698px;">Tesco</span>
<span class="t" style="left:1943.16px;top:608px;font-size:21.60px;line-height:21.60px;color:#111113;letter-spacing:0.667px;">2026-03-15</span>
<span class="t" style="left:2212.04px;top:606px;font-size:25.20px;line-height:25.20px;color:#111113;letter-spacing:1.046px;-webkit-text-stroke:0.3px #111113;">£22.08</span>
<div class="b" style="left:2317.75px;top:600.00px;width:146.25px;height:37.00px;background:#18181b;border-radius:10.5px;box-shadow:0 1px 3px rgba(0,0,0,.2);"></div>
<span class="t" style="left:2335.94px;top:609px;font-size:20.80px;line-height:20.80px;color:#fff;letter-spacing:1.320px;-webkit-text-stroke:0.75px #fff;">Completed</span>
<div class="b" style="left:983.00px;top:671.00px;width:1510.00px;height:1.00px;background:#e3e5ea;"></div>
<span class="t" style="left:1010.11px;top:690px;font-size:25.20px;line-height:25.20px;color:#6b7280;letter-spacing:0.247px;">Subtotal:</span>
<span class="t" style="left:1118.04px;top:690px;font-size:25.20px;line-height:25.20px;color:#111113;letter-spacing:0.274px;-webkit-text-stroke:0.4px #111113;">£18.40</span>
<span class="t" style="left:1509.43px;top:690px;font-size:25.20px;line-height:25.20px;color:#6b7280;letter-spacing:0.550px;">Tax:</span>
<span class="t" style="left:1563.04px;top:690px;font-size:25.20px;line-height:25.20px;color:#111113;letter-spacing:0.936px;-webkit-text-stroke:0.4px #111113;">£3.68</span>
<span class="t" style="left:2006.18px;top:690px;font-size:25.20px;line-height:25.20px;color:#6b7280;letter-spacing:0.274px;">Payment:</span>
<span class="t" style="left:2120.22px;top:690px;font-size:25.20px;line-height:25.20px;color:#111113;letter-spacing:0.677px;-webkit-text-stroke:0.4px #111113;">Card</span>
<span class="t" style="left:1009.18px;top:738px;font-size:25.20px;line-height:25.20px;color:#6b7280;letter-spacing:0.378px;">Receipt #:</span>
<span class="t" style="left:1131.93px;top:738px;font-size:25.20px;line-height:25.20px;color:#111113;letter-spacing:0.929px;-webkit-text-stroke:0.4px #111113;">TE-38243</span>
<span class="t" style="left:1009.48px;top:792px;font-size:21.60px;line-height:21.60px;color:#6b7280;letter-spacing:0.323px;-webkit-text-stroke:0.4px #6b7280;">Line Items</span>
<div class="b" style="left:1011.75px;top:827.00px;width:1451.75px;height:298.50px;border:1.5px solid #e5e7eb;border-radius:10.5px;background:#fcfcfd;"></div>
<span class="t" style="left:1031.23px;top:842px;font-size:21.60px;line-height:21.60px;color:#6b7280;letter-spacing:0.713px;-webkit-text-stroke:0.4px #6b7280;">Description</span>
<span class="t" style="left:2139.23px;top:842px;font-size:21.60px;line-height:21.60px;color:#6b7280;letter-spacing:0.857px;-webkit-text-stroke:0.4px #6b7280;">Qty</span>
<span class="t" style="left:2211.58px;top:842px;font-size:21.60px;line-height:21.60px;color:#6b7280;letter-spacing:0.444px;-webkit-text-stroke:0.4px #6b7280;">Unit Price</span>
<span class="t" style="left:2394.51px;top:842px;font-size:21.60px;line-height:21.60px;color:#6b7280;letter-spacing:0.826px;-webkit-text-stroke:0.4px #6b7280;">Total</span>
<div class="b" style="left:1012.50px;top:876.00px;width:1450.25px;height:1.00px;background:#e3e5ea;"></div>
<span class="t" style="left:1032.02px;top:891px;font-size:21.60px;line-height:21.60px;color:#18181b;letter-spacing:0.280px;">Semi-skimmed milk</span>
<span class="t" style="left:2163.57px;top:891px;font-size:21.60px;line-height:21.60px;color:#18181b;">2</span>
<span class="t" style="left:2256.89px;top:891px;font-size:21.60px;line-height:21.60px;color:#18181b;letter-spacing:-0.446px;">£1.25</span>
<span class="t" style="left:2386.39px;top:891px;font-size:21.60px;line-height:21.60px;color:#18181b;letter-spacing:0.600px;">£2.50</span>
<div class="b" style="left:1012.50px;top:926.00px;width:1450.25px;height:1.00px;background:#e3e5ea;"></div>
<span class="t" style="left:1032.91px;top:941px;font-size:21.60px;line-height:21.60px;color:#18181b;letter-spacing:0.157px;">Wholemeal bread</span>
<span class="t" style="left:2163.54px;top:941px;font-size:21.60px;line-height:21.60px;color:#18181b;">1</span>
<span class="t" style="left:2256.39px;top:941px;font-size:21.60px;line-height:21.60px;color:#18181b;letter-spacing:-0.321px;">£1.45</span>
<span class="t" style="left:2390.14px;top:941px;font-size:21.60px;line-height:21.60px;color:#18181b;letter-spacing:-0.321px;">£1.45</span>
<div class="b" style="left:1012.50px;top:977.00px;width:1450.25px;height:1.00px;background:#e3e5ea;"></div>
<span class="t" style="left:1031.90px;top:990px;font-size:21.60px;line-height:21.60px;color:#18181b;letter-spacing:0.302px;">Chicken breast fillets</span>
<span class="t" style="left:2163.54px;top:990px;font-size:21.60px;line-height:21.60px;color:#18181b;">1</span>
<span class="t" style="left:2253.39px;top:990px;font-size:21.60px;line-height:21.60px;color:#18181b;letter-spacing:0.429px;">£6.95</span>
<span class="t" style="left:2387.14px;top:990px;font-size:21.60px;line-height:21.60px;color:#18181b;letter-spacing:0.429px;">£6.95</span>
<div class="b" style="left:1012.50px;top:1026.00px;width:1450.25px;height:1.00px;background:#e3e5ea;"></div>
<span class="t" style="left:1031.23px;top:1041px;font-size:21.60px;line-height:21.60px;color:#18181b;letter-spacing:0.499px;">Mixed fruit pack</span>
<span class="t" style="left:2163.54px;top:1041px;font-size:21.60px;line-height:21.60px;color:#18181b;">1</span>
<span class="t" style="left:2252.14px;top:1041px;font-size:21.60px;line-height:21.60px;color:#18181b;letter-spacing:0.725px;">£3.20</span>
<span class="t" style="left:2385.89px;top:1041px;font-size:21.60px;line-height:21.60px;color:#18181b;letter-spacing:0.725px;">£3.20</span>
<div class="b" style="left:1012.50px;top:1076.00px;width:1450.25px;height:1.00px;background:#e3e5ea;"></div>
<span class="t" style="left:1031.91px;top:1091px;font-size:21.60px;line-height:21.60px;color:#18181b;letter-spacing:0.420px;">Ground coffee</span>
<span class="t" style="left:2163.54px;top:1091px;font-size:21.60px;line-height:21.60px;color:#18181b;">1</span>
<span class="t" style="left:2252.14px;top:1091px;font-size:21.60px;line-height:21.60px;color:#18181b;letter-spacing:0.725px;">£4.30</span>
<span class="t" style="left:2385.89px;top:1091px;font-size:21.60px;line-height:21.60px;color:#18181b;letter-spacing:0.725px;">£4.30</span>
<div class="b" style="left:983.00px;top:1154.00px;width:1510.00px;height:1.00px;background:#e3e5ea;"></div>
<svg class="i" style="left:1012.10px;top:1195.70px" width="25.00" height="25.00" viewBox="0 0 24 24" fill="none" stroke="#6b7280" stroke-width="2" stroke-linecap="round" stroke-linejoin="round"><path d="m9 18 6-6-6-6"/></svg>
<span class="t" style="left:1050.88px;top:1180px;font-size:25.20px;line-height:25.20px;color:#111113;letter-spacing:0.704px;-webkit-text-stroke:0.4px #111113;">boots-20260312-1306.jpg</span>
<span class="t" style="left:1051.39px;top:1214px;font-size:21.60px;line-height:21.60px;color:#6b7280;letter-spacing:-0.143px;">78.9 KB</span>
<span class="t" style="left:1475.93px;top:1196px;font-size:25.20px;line-height:25.20px;color:#111113;letter-spacing:0.447px;">Boots</span>
<span class="t" style="left:1943.16px;top:1198px;font-size:21.60px;line-height:21.60px;color:#111113;letter-spacing:0.687px;">2026-03-12</span>
<span class="t" style="left:2197.54px;top:1196px;font-size:25.20px;line-height:25.20px;color:#111113;letter-spacing:0.981px;-webkit-text-stroke:0.3px #111113;">£229.92</span>
<div class="b" style="left:2317.75px;top:1188.25px;width:146.25px;height:37.00px;background:#18181b;border-radius:10.5px;box-shadow:0 1px 3px rgba(0,0,0,.2);"></div>
<span class="t" style="left:2335.94px;top:1199px;font-size:20.80px;line-height:20.80px;color:#fff;letter-spacing:1.320px;-webkit-text-stroke:0.75px #fff;">Completed</span>
<div class="b" style="left:983.00px;top:1259.00px;width:1510.00px;height:1.00px;background:#e3e5ea;"></div>
<svg class="i" style="left:1012.10px;top:1300.70px" width="25.00" height="25.00" viewBox="0 0 24 24" fill="none" stroke="#6b7280" stroke-width="2" stroke-linecap="round" stroke-linejoin="round"><path d="m9 18 6-6-6-6"/></svg>
<span class="t" style="left:1050.88px;top:1286px;font-size:25.20px;line-height:25.20px;color:#111113;letter-spacing:0.828px;-webkit-text-stroke:0.4px #111113;">pret-a-manger-20260313-8605.j...</span>
<span class="t" style="left:1051.68px;top:1319px;font-size:21.60px;line-height:21.60px;color:#6b7280;letter-spacing:0.084px;">358.9 KB</span>
<span class="t" style="left:1475.93px;top:1301px;font-size:25.20px;line-height:25.20px;color:#111113;letter-spacing:0.399px;">Pret A Manger</span>
<span class="t" style="left:1943.16px;top:1303px;font-size:21.60px;line-height:21.60px;color:#111113;letter-spacing:0.671px;">2026-03-13</span>
<span class="t" style="left:2196.79px;top:1301px;font-size:25.20px;line-height:25.20px;color:#111113;letter-spacing:1.018px;-webkit-text-stroke:0.3px #111113;">£220.34</span>
<div class="b" style="left:2317.75px;top:1293.25px;width:146.25px;height:37.00px;background:#18181b;border-radius:10.5px;box-shadow:0 1px 3px rgba(0,0,0,.2);"></div>
<span class="t" style="left:2335.94px;top:1304px;font-size:20.80px;line-height:20.80px;color:#fff;letter-spacing:1.320px;-webkit-text-stroke:0.75px #fff;">Completed</span>
<div class="b" style="left:983.00px;top:1364.00px;width:1510.00px;height:1.00px;background:#e3e5ea;"></div>
<svg class="i" style="left:1012.10px;top:1405.70px" width="25.00" height="25.00" viewBox="0 0 24 24" fill="none" stroke="#6b7280" stroke-width="2" stroke-linecap="round" stroke-linejoin="round"><path d="m9 18 6-6-6-6"/></svg>
<span class="t" style="left:1051.80px;top:1390px;font-size:25.20px;line-height:25.20px;color:#111113;letter-spacing:0.840px;-webkit-text-stroke:0.4px #111113;">shell-20260313-5028.png</span>
<span class="t" style="left:1051.41px;top:1424px;font-size:21.60px;line-height:21.60px;color:#6b7280;letter-spacing:0.194px;">242.8 KB</span>
<span class="t" style="left:1476.86px;top:1406px;font-size:25.20px;line-height:25.20px;color:#111113;letter-spacing:0.010px;">Shell</span>
<span class="t" style="left:1943.16px;top:1408px;font-size:21.60px;line-height:21.60px;color:#111113;letter-spacing:0.671px;">2026-03-13</span>
<span class="t" style="left:2213.79px;top:1406px;font-size:25.20px;line-height:25.20px;color:#111113;letter-spacing:0.731px;-webkit-text-stroke:0.3px #111113;">£66.27</span>
<div class="b" style="left:2317.75px;top:1398.25px;width:146.25px;height:37.00px;background:#18181b;border-radius:10.5px;box-shadow:0 1px 3px rgba(0,0,0,.2);"></div>
<span class="t" style="left:2335.94px;top:1409px;font-size:20.80px;line-height:20.80px;color:#fff;letter-spacing:1.320px;-webkit-text-stroke:0.75px #fff;">Completed</span>
<div class="b" style="left:983.00px;top:1469.00px;width:1510.00px;height:1.00px;background:#e3e5ea;"></div>
<svg class="i" style="left:1012.10px;top:1510.70px" width="25.00" height="25.00" viewBox="0 0 24 24" fill="none" stroke="#6b7280" stroke-width="2" stroke-linecap="round" stroke-linejoin="round"><path d="m9 18 6-6-6-6"/></svg>
<span class="t" style="left:1050.83px;top:1496px;font-size:25.20px;line-height:25.20px;color:#111113;letter-spacing:1.446px;-webkit-text-stroke:0.4px #111113;">nationalrail-20260311-9057.j...</span>
<span class="t" style="left:1050.85px;top:1529px;font-size:21.60px;line-height:21.60px;color:#6b7280;letter-spacing:-0.012px;">164.2 KB</span>
<span class="t" style="left:1475.93px;top:1511px;font-size:25.20px;line-height:25.20px;color:#111113;letter-spacing:0.073px;">National Rail</span>
<span class="t" style="left:1943.16px;top:1513px;font-size:21.60px;line-height:21.60px;color:#111113;letter-spacing:0.861px;">2026-03-11</span>
<span class="t" style="left:2213.79px;top:1511px;font-size:25.20px;line-height:25.20px;color:#111113;letter-spacing:0.674px;-webkit-text-stroke:0.3px #111113;">£84.60</span>
<div class="b" style="left:2317.75px;top:1503.25px;width:146.25px;height:37.00px;background:#18181b;border-radius:10.5px;box-shadow:0 1px 3px rgba(0,0,0,.2);"></div>
<span class="t" style="left:2335.94px;top:1514px;font-size:20.80px;line-height:20.80px;color:#fff;letter-spacing:1.320px;-webkit-text-stroke:0.75px #fff;">Completed</span>
</section>
</div></main>
</div>
</body></html>
